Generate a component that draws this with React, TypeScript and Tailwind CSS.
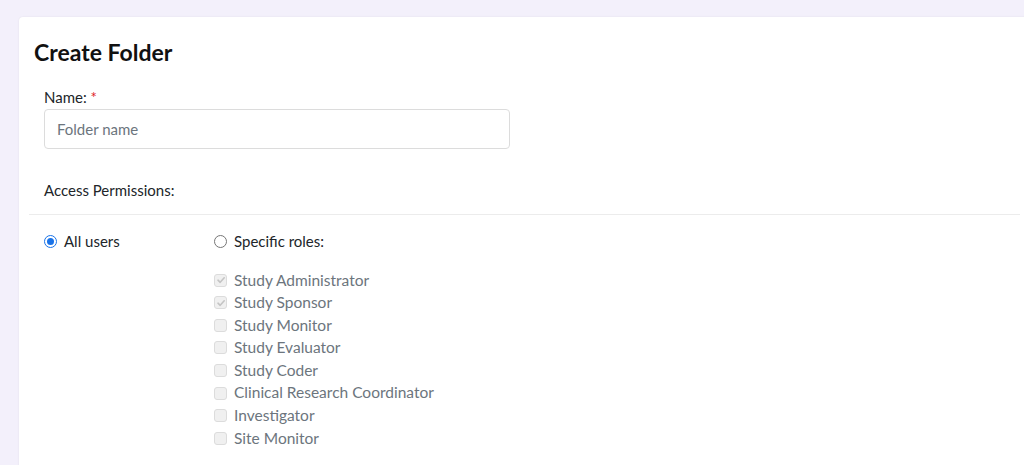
import React from "react";

const roles = [
  { name: "Study Administrator", checked: true },
  { name: "Study Sponsor", checked: true },
  { name: "Study Monitor", checked: false },
  { name: "Study Evaluator", checked: false },
  { name: "Study Coder", checked: false },
  { name: "Clinical Research Coordinator", checked: false },
  { name: "Investigator", checked: false },
  { name: "Site Monitor", checked: false },
];

function Checkbox({ checked }: { checked: boolean }) {
  return (
    <span className="flex h-[13px] w-[13px] shrink-0 items-center justify-center rounded-[3px] border border-[#dcdcdc] bg-[#f0f0f0]">
      {checked && (
        <svg width="10" height="10" viewBox="0 0 10 10">
          <path d="M2 5.2 L4.2 7.3 L8.2 2.8" fill="none" stroke="#c4c4c4" strokeWidth="1.6" strokeLinecap="round" strokeLinejoin="round" />
        </svg>
      )}
    </span>
  );
}

function Radio({ checked }: { checked: boolean }) {
  return checked ? (
    <span className="flex h-[13px] w-[13px] shrink-0 items-center justify-center rounded-full border-[1.5px] border-[#1a73e8] bg-white">
      <span className="h-[7px] w-[7px] rounded-full bg-[#1a73e8]" />
    </span>
  ) : (
    <span className="h-[13px] w-[13px] shrink-0 rounded-full border border-[#767676] bg-white" />
  );
}

export default function App() {
  return (
    <div
      className="h-[465px] w-[1024px] overflow-hidden bg-[#f3f0fb] pl-[19px] pt-[17px] text-[#212529]"
      style={{ fontFamily: "Lato, 'Noto Sans', sans-serif" }}
    >
      <div className="h-[480px] w-[1011px] rounded-tl-[4px] bg-white shadow-[0_0_2px_rgba(0,0,0,0.08)]">
        <div className="px-[15px] pt-[20px]">
          <h1 className="text-[23px] font-bold leading-[30px] text-[#111]">Create Folder</h1>
        </div>
        <div className="px-[25px] pt-[20px]">
          <div className="text-[15px] leading-[20px]">
            Name: <span className="text-[#e0201e]">*</span>
          </div>
          <div className="mt-[2px] flex h-[40px] w-[466px] items-center rounded-[4px] border border-[#dcdcdc] px-[12px]">
            <span className="text-[15px] text-[#6c757d]">Folder name</span>
          </div>
          <div className="mt-[31px] text-[15px] leading-[20px]">Access Permissions:</div>
        </div>
        <div className="mx-[10px] mt-[14px] h-px bg-[#ececec]" />
        <div className="flex items-start px-[25px] pt-[16px]">
          <label className="flex w-[170px] items-center gap-[7px] text-[15px] leading-[20px]">
            <Radio checked />
            <span>All users</span>
          </label>
          <div className="flex flex-col">
            <label className="flex items-center gap-[7px] text-[15px] leading-[20px]">
              <Radio checked={false} />
              <span>Specific roles:</span>
            </label>
            <div className="mt-[18px] flex flex-col">
              {roles.map((r) => (
                <label key={r.name} className="flex h-[22.57px] items-center gap-[7px] text-[15.5px] text-[#6c757d]">
                  <Checkbox checked={r.checked} />
                  <span>{r.name}</span>
                </label>
              ))}
            </div>
          </div>
        </div>
      </div>
    </div>
  );
}
